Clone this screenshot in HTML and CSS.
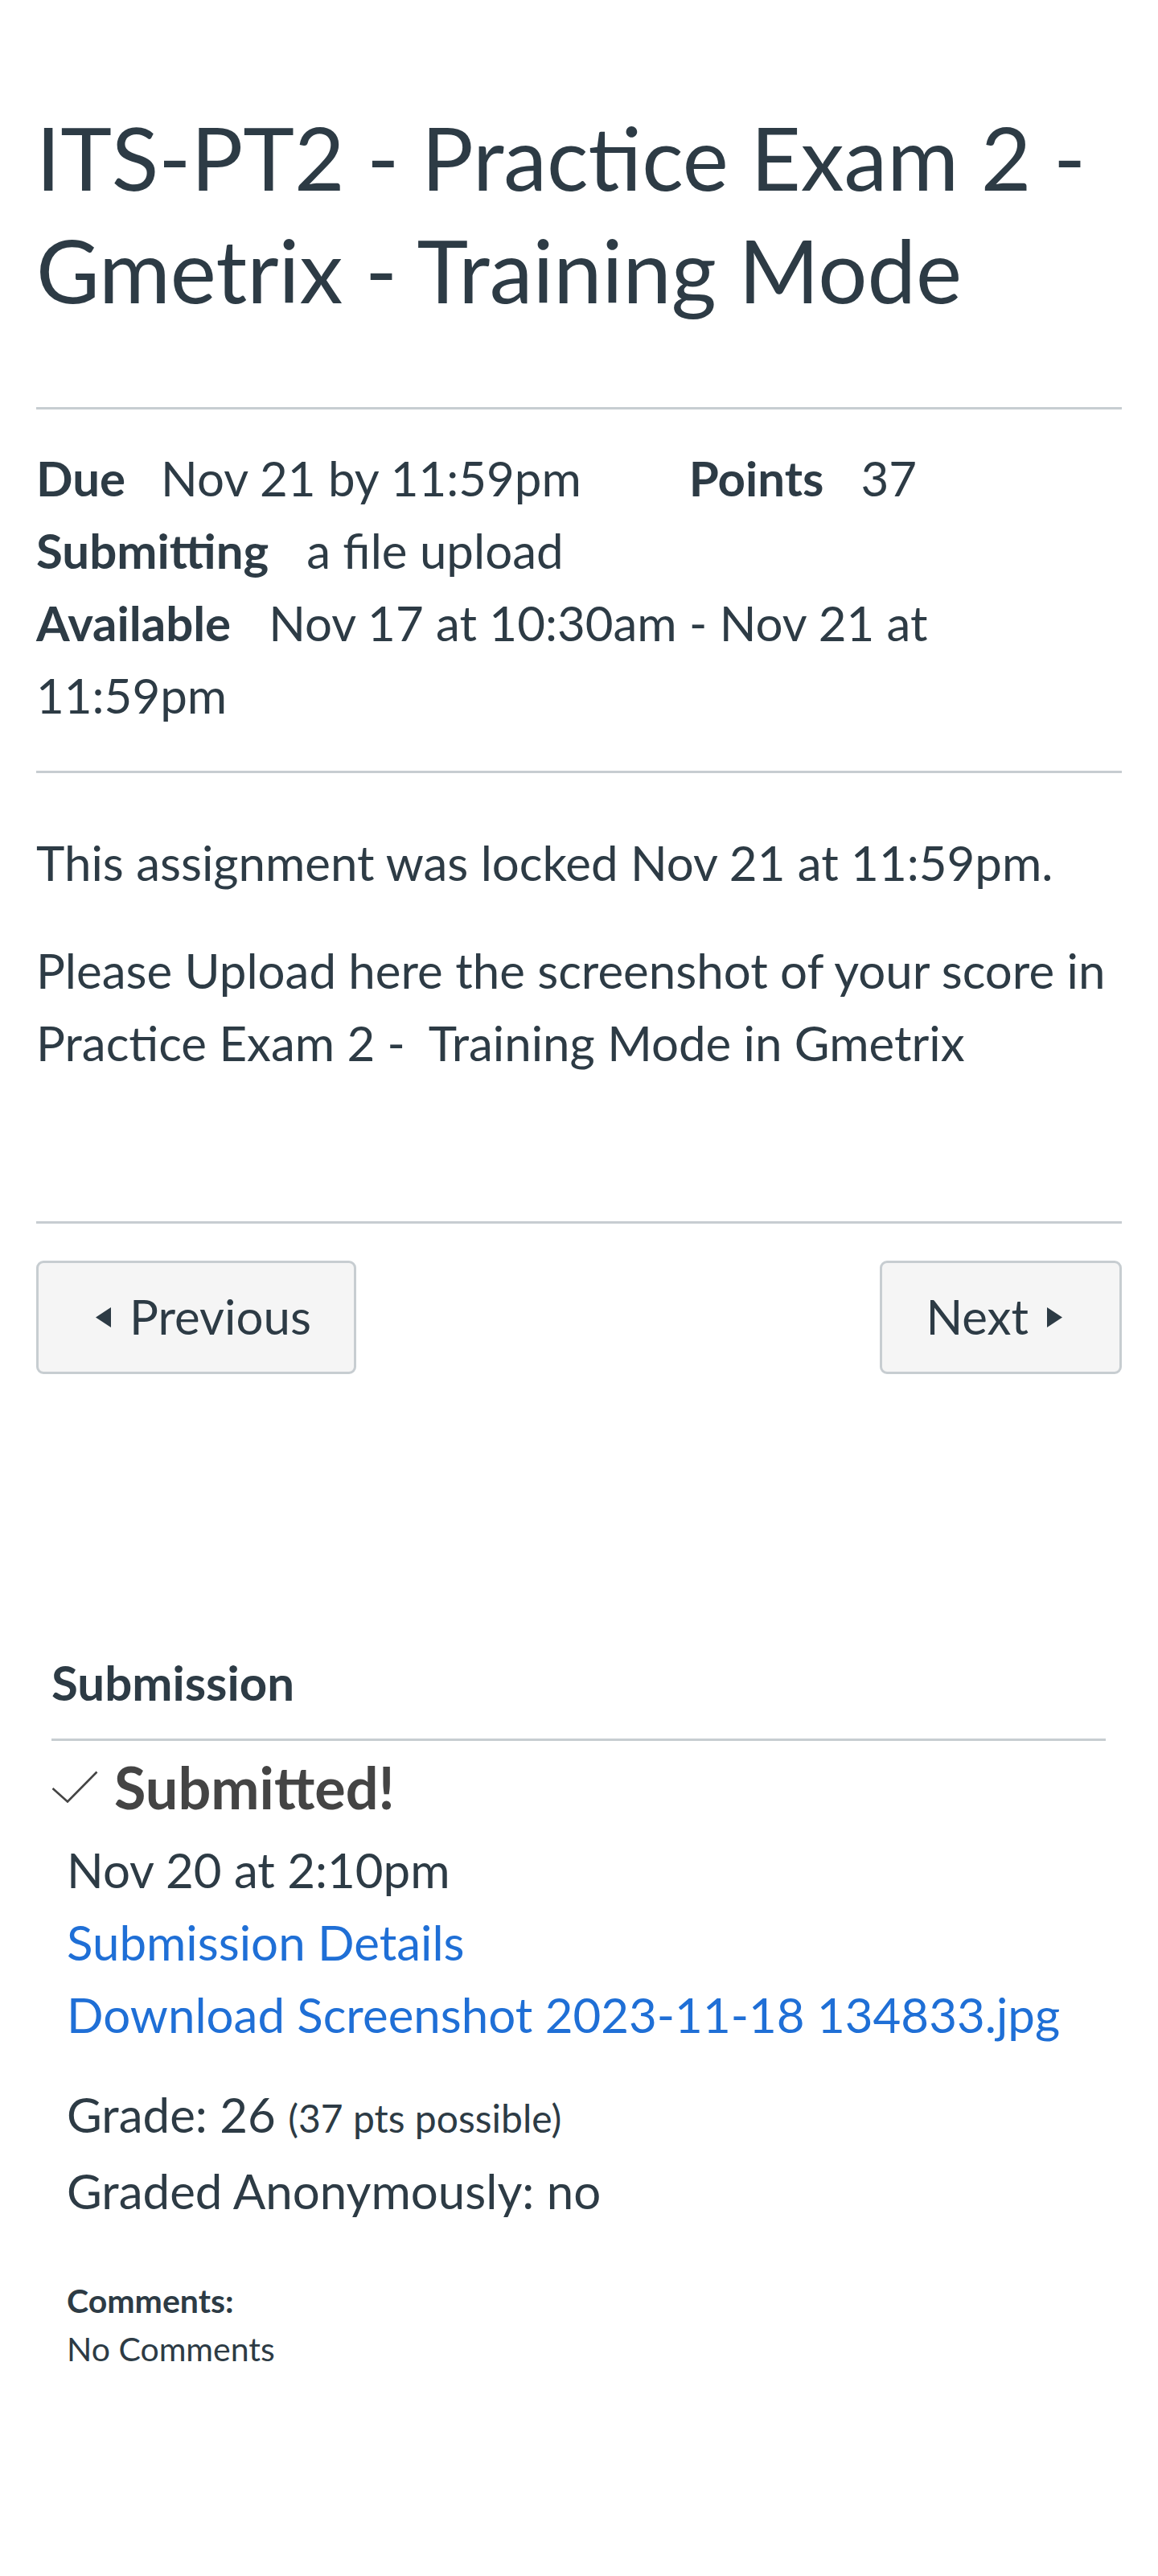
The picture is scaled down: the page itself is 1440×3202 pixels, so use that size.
FILE: index.html
```html
<!DOCTYPE html>
<html lang="en">
<head>
<meta charset="utf-8">
<title>ITS-PT2 - Practice Exam 2 - Gmetrix - Training Mode</title>
<link rel="stylesheet" href="styles.css">
</head>
<body>
<div class="page">
  <h1 class="title">ITS-PT2 - Practice Exam 2 - Gmetrix - Training Mode</h1>
  <hr class="rule rule-title">

  <div class="overview">
    <div class="row">
      <span class="item"><span class="label">Due</span><span class="value">Nov 21 by 11:59pm</span></span>
      <span class="item item-points"><span class="label">Points</span><span class="value">37</span></span>
    </div>
    <div class="row"><span class="label">Submitting</span><span class="value">a file upload</span></div>
    <div class="row"><span class="label">Available</span><span class="value">Nov 17 at 10:30am - Nov 21 at 11:59pm</span></div>
  </div>
  <hr class="rule rule-overview">

  <div class="description">
    <p class="locked">This assignment was locked Nov 21 at 11:59pm.</p>
    <p class="desc">Please Upload here the screenshot of your score in Practice Exam 2 -&nbsp; Training Mode in Gmetrix</p>
  </div>
  <hr class="rule rule-desc">

  <div class="nav">
    <a class="btn btn-prev" href="#">
      <svg class="tri" width="19" height="25" viewBox="0 0 19 25" aria-hidden="true"><polygon points="19,0 19,25 0,12.5" fill="#2d3b45"/></svg>
      <span>Previous</span>
    </a>
    <a class="btn btn-next" href="#">
      <span>Next</span>
      <svg class="tri" width="19" height="25" viewBox="0 0 19 25" aria-hidden="true"><polygon points="0,0 0,25 19,12.5" fill="#2d3b45"/></svg>
    </a>
  </div>

  <section class="submission">
    <h2 class="sub-heading">Submission</h2>
    <hr class="rule rule-sub">
    <div class="submitted">
      <svg class="check" width="58" height="40" viewBox="0 0 58 40" aria-hidden="true"><polyline points="1.5,22 20,38.5 56.5,1.5" fill="none" stroke="#444" stroke-width="2.6"/></svg>
      <span>Submitted!</span>
    </div>
    <div class="details">
      <div class="line">Nov 20 at 2:10pm</div>
      <div class="line"><a class="link" href="#">Submission Details</a></div>
      <div class="line"><a class="link" href="#">Download Screenshot 2023-11-18 134833.jpg</a></div>
      <div class="grade">
        <div class="line">Grade: 26 <span class="small">(37 pts possible)</span></div>
        <div class="line">Graded Anonymously: no</div>
      </div>
      <div class="comments">
        <div class="comments-title">Comments:</div>
        <div class="comments-body">No Comments</div>
      </div>
    </div>
  </section>
</div>
</body>
</html>
```
FILE: styles.css
```css
html, body {
  margin: 0;
  padding: 0;
  background: #ffffff;
}

body {
  font-family: Lato, "Open Sans", "Liberation Sans", sans-serif;
  color: #2d3b45;
  font-size: 60px;
  line-height: 90px;
}

.page {
  padding: 125px 45px 200px;
}

.title {
  font-size: 108px;
  line-height: 140px;
  font-weight: 400;
  margin: 0 0 101px;
}

.rule {
  border: 0;
  border-top: 3px solid #c7cdd1;
  margin: 0;
  height: 0;
}

.overview {
  margin: 40px 0 49px;
}

.row {
  display: flex;
  flex-wrap: wrap;
}

.row:last-child {
  display: block;
}

.label {
  font-weight: 700;
  margin-right: 47px;
}

.item {
  display: flex;
}

.item:first-child .label {
  margin-right: 44px;
}

.item-points {
  margin-left: 134px;
}

.item-points .label {
  margin-right: 46px;
}

.description {
  margin: 66px 0 177px;
}

.description p {
  margin: 0;
}

.locked {
  margin-bottom: 44px !important;
}

.nav {
  display: flex;
  justify-content: space-between;
  margin-top: 46px;
}

.btn {
  display: inline-flex;
  align-items: center;
  box-sizing: border-box;
  height: 141px;
  border: 3px solid #c7cdd1;
  border-radius: 9px;
  background: #f5f5f5;
  color: #2d3b45;
  text-decoration: none;
  gap: 23px;
}

.btn-prev {
  padding: 0 53px 0 71px;
}

.btn-next {
  padding: 0 71px 0 54px;
}

.btn span {
  position: relative;
  top: -2px;
}

.submission {
  margin-top: 338px;
  padding: 0 20px 0 19px;
}

.sub-heading {
  font-size: 60px;
  line-height: 90px;
  font-weight: 700;
  margin: 0 0 25px;
}

.submitted {
  display: flex;
  align-items: center;
  gap: 20px;
  margin-top: 12px;
  font-size: 72px;
  line-height: 90px;
  font-weight: 700;
  color: #444444;
}

.check {
  flex: none;
}

.details {
  padding-left: 19px;
  margin-top: 13px;
}

.link {
  color: #1f6fd6;
  text-decoration: none;
}

.grade {
  margin-top: 34px;
}

.small {
  font-size: 48px;
}

.comments {
  margin-top: 62px;
  font-size: 41px;
  line-height: 60px;
}

.comments-title {
  font-weight: 700;
}
```
